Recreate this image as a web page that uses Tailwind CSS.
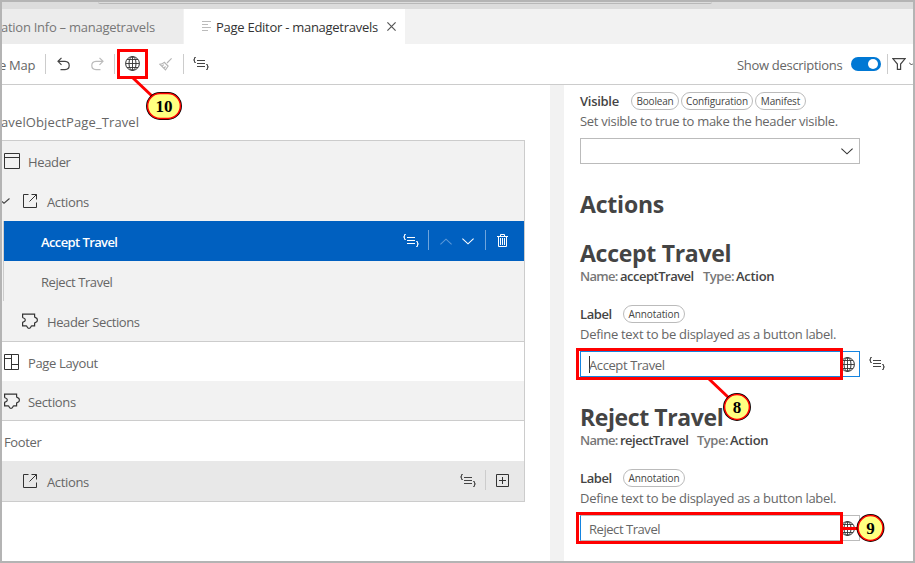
<!DOCTYPE html>
<html lang="en">
<head>
<meta charset="utf-8">
<title>Page Editor - managetravels</title>
<script src="https://cdn.jsdelivr.net/npm/@tailwindcss/browser@4"></script>
</head>
<body class="w-[915px] h-[563px] overflow-hidden bg-white">
<svg class="hidden">
  <symbol id="code" viewBox="0 0 16 13"><g fill="none" stroke="currentColor" stroke-width="1"><path d="M4 3.5h8M4 6.5h8M4 9.5h8"/><path d="M2.8.5H2.3Q1.5.5 1.5 1.3V2Q1.5 2.8.4 2.9Q1.5 3 1.5 4v.5Q1.5 5.5 2.3 5.5h.5M13.2 7.5h.5q.8 0 .8.8V9q0 .8 1.1.9q-1.1.1-1.1 1.1v.5q0 1-.8 1h-.5" stroke-width="1.1"/></g></symbol>
  <symbol id="globe" viewBox="0 0 15 15"><g fill="none" stroke="currentColor" stroke-width="1"><circle cx="7.500" cy="7.500" r="6.900"/><ellipse cx="7.500" cy="7.500" rx="3.500" ry="6.900"/><path d="M7.500.6v13.800M.6 7.500h13.800M2 3.500h11M2 11.500h11" stroke-width=".9"/></g></symbol>
  <symbol id="ext" viewBox="0 0 14 14"><path d="M5.5.5h-5v13h13v-5M6.5 7.5l7-7M8.5.5h5v5" fill="none" stroke="currentColor"/></symbol>
  <symbol id="puzzle" viewBox="0 0 16 16"><path d="M.6 1.2h12v2.3q0 1 1 1.1q1.8.5 1.8 2.4t-1.8 2.4q-1 .2-1 1.2v2.2H10q-.8 0-1 .8q-.4 1.7-2 1.7t-2-1.7q-.2-.8-1-.8H.6V9.800q0-.8.9-1Q3.300 8.300 3.300 6.900T1.500 5Q.6 4.700.6 4z" fill="none" stroke="currentColor" stroke-width="1.2"/></symbol>
  <symbol id="down" viewBox="0 0 12 7"><path d="M.4.7L6 5.800 11.600.7" fill="none" stroke="currentColor" stroke-width="1.1"/></symbol>
</svg>

<div class="w-full h-full flex flex-col border-2 border-[#b4b4b4] font-['Open_Sans','Noto_Sans',sans-serif] text-[13px] leading-[18px] text-[#666] whitespace-nowrap overflow-hidden">
  <!-- window edge -->
  <div class="h-[7px] shrink-0 bg-[#dcdcdc] pl-[96px]"><div class="w-[614px] h-[2px] rounded-b-md border-b border-[#b8b8b8]"></div></div>
  <!-- tabs -->
  <div class="h-[35px] shrink-0 flex bg-[#f2f2f2]">
    <div class="w-[181px] bg-[#ececec] flex items-center overflow-hidden text-[#777]"><span class="-ml-[1px] tracking-[-0.26px]">ation Info – managetravels</span></div>
    <div class="w-px bg-[#f2f2f2]"></div>
    <div class="w-[221px] bg-white flex items-center pl-[18px] text-[#333]">
      <svg class="w-[9px] h-[10px] mr-[5px] -mt-[1px] text-[#bbb]" viewBox="0 0 9 10"><path d="M0 .5h9M0 3.500h6M0 6.500h9M0 9.500h6" stroke="currentColor"/></svg>
      <span class="w-[163px] tracking-[-0.27px]">Page Editor - managetravels</span>
      <svg class="w-[9px] h-[9px] ml-[8px] text-[#555]" viewBox="0 0 9 9"><path d="M.4.4l8.200 8.200M8.600.4L.4 8.600" stroke="currentColor" stroke-width="1.2"/></svg>
    </div>
  </div>
  <!-- toolbar -->
  <div class="h-[41px] shrink-0 flex items-center border-b border-[#ccc]">
    <span class="w-[43px] pt-[2px] -ml-[3px] mr-[3px] tracking-[-0.3px]">e Map</span>
    <div class="w-px h-5 bg-[#ccc]"></div>
    <svg class="w-[13px] h-[14px] ml-[11px] text-[#444]" viewBox="0 0 13 14"><path d="M4.500.8L1 4.300l3.500 3.500M1 4.300h7q4.200.2 4.200 4.200T8 12.600H3.500" fill="none" stroke="currentColor" stroke-width="1.2"/></svg>
    <svg class="w-[13px] h-[14px] ml-[21px] text-[#bbb] -scale-x-100" viewBox="0 0 13 14"><path d="M4.500.8L1 4.300l3.500 3.500M1 4.300h7q4.200.2 4.200 4.200T8 12.600H3.500" fill="none" stroke="currentColor" stroke-width="1.2"/></svg>
    <div class="w-px h-5 bg-[#ccc] ml-[10px]"></div>
    <svg class="w-[15px] h-[15px] ml-[10px] -mt-px text-[#333]"><use href="#globe"/></svg>
    <svg class="w-[13px] h-[13px] ml-[19px] text-[#b4b4b4]" viewBox="0 0 13 13"><path d="M12.600.4L8 5M5 4l4.500 4.500M5.200 4.300Q3.500 6 .8 6.200L6.500 12Q7.500 10.500 9 8.300M3.200 8.200l1.600-1.500M5 10l1.600-1.500" fill="none" stroke="currentColor" stroke-width="1.100"/></svg>
    <div class="w-px h-5 bg-[#ccc] ml-[11px]"></div>
    <svg class="w-[16px] h-[13px] ml-[9px] -mt-px text-[#444]"><use href="#code"/></svg>
    <div class="ml-auto flex items-center h-full">
      <span class="w-[105px] pt-[2px] tracking-[-0.3px]">Show descriptions</span>
      <div class="w-[30px] h-[14px] ml-[9px] rounded-full bg-[#0078d4] flex items-center justify-end pr-[3px]"><div class="size-[10px] rounded-full bg-white"></div></div>
      <div class="w-px h-5 bg-[#ccc] ml-[6px]"></div>
      <svg class="w-[14px] h-[12px] ml-[4px] text-[#444]" viewBox="0 0 14 12"><path d="M.8.6h12.400L8.600 6v5.400H5.400V6z" fill="none" stroke="currentColor" stroke-width="1.200"/></svg>
      <svg class="w-[4px] h-[4px] ml-[3px] text-[#444]" viewBox="0 0 4 4"><path d="M0 .5L2.500 3 4 1.500" fill="none" stroke="currentColor"/></svg>
    </div>
  </div>

  <div class="flex flex-1 min-h-0">
    <!-- outline -->
    <div class="w-[548px] shrink-0 tracking-[-0.35px]">
      <div class="h-[55px] pt-[28px] tracking-[0.12px]"><span class="-ml-px">avelObjectPage_Travel</span></div>
      <div class="w-[523px] border-y border-r border-[#ccc] bg-[#f2f2f2]">
        <div class="h-10 flex items-center pl-[2px]">
          <svg class="size-4 mr-2 text-[#333]" viewBox="0 0 16 16"><path d="M.5.5h15v15H.5zM.5 4.500h15" fill="none" stroke="currentColor"/></svg><span class="pt-px">Header</span>
        </div>
        <div class="h-10 flex items-center">
          <svg class="w-[8px] h-[6px] mr-[13px] text-[#444]" viewBox="0 0 8 6"><path d="M0 3.500L2 5.200 7.500.5" fill="none" stroke="currentColor" stroke-width="1.100"/></svg>
          <svg class="size-[14px] mr-[10px] text-[#333]"><use href="#ext"/></svg><span class="pt-px">Actions</span>
        </div>
        <div class="border-l border-[#ccc] ml-px">
          <div class="h-10 flex items-center bg-[#0060c0] pl-[37px] text-white">
            <span class="pt-px font-semibold tracking-[-0.6px]">Accept Travel</span>
            <div class="ml-auto flex items-center">
              <svg class="w-[16px] h-[13px] -mt-px"><use href="#code"/></svg>
              <div class="w-px h-5 bg-[#6fa5dc] ml-[9px] -mt-[2px]"></div>
              <svg class="w-3 h-[7px] ml-[11px] text-[#5b98d8] rotate-180"><use href="#down"/></svg>
              <svg class="w-3 h-[7px] ml-[10px]"><use href="#down"/></svg>
              <div class="w-px h-5 bg-[#6fa5dc] ml-[11px] -mt-[2px]"></div>
              <svg class="w-[11px] h-[13px] ml-[11px] mr-[16px] -mt-px" viewBox="0 0 11 13"><path d="M0 2.500h11M3.500 2.500v-2h4v2M1.500 2.500v10h8v-10M3.500 4v7M5.500 4v7M7.500 4v7" fill="none" stroke="currentColor"/></svg>
            </div>
          </div>
          <div class="h-10 flex items-center pl-[37px]"><span class="pt-px tracking-[-0.42px]">Reject Travel</span></div>
        </div>
        <div class="h-10 flex items-center pl-5"><svg class="size-4 mr-[9px] text-[#333]"><use href="#puzzle"/></svg><span class="pt-px tracking-[-0.4px]">Header Sections</span></div>
      </div>
      <div class="w-[523px] border-r border-b border-[#ccc]">
        <div class="h-[39px] flex items-center pl-[2px]"><svg class="w-[15px] h-4 mr-[9px] text-[#333]" viewBox="0 0 15 16"><path d="M.5.5h14v15H.5zM.5 4.500h7M7.500.5v15M7.500 10.500h7" fill="none" stroke="currentColor"/></svg><span class="pt-[2px]">Page Layout</span></div>
        <div class="h-[39px] flex items-center pl-[2px] bg-[#f2f2f2]"><svg class="size-4 mr-2 text-[#333]"><use href="#puzzle"/></svg><span class="pt-[2px]">Sections</span></div>
        <div class="h-[41px] border-t border-[#ccc] flex items-center pl-[2px]"><span class="pt-px">Footer</span></div>
        <div class="h-10 flex items-center bg-[#e8e8e8] pl-[21px]">
          <svg class="size-[14px] mr-[10px] text-[#333]"><use href="#ext"/></svg><span class="pt-px">Actions</span>
          <svg class="w-[16px] h-[13px] ml-auto -mt-px text-[#444]"><use href="#code"/></svg>
          <div class="w-px h-5 bg-[#ccc] ml-[9px] -mt-[2px]"></div>
          <svg class="size-[13px] ml-[10px] mr-[15px] -mt-px text-[#333]" viewBox="0 0 13 13"><path d="M.5.5h12v12H.5zM6.500 3v7M3 6.500h7" fill="none" stroke="currentColor"/></svg>
        </div>
      </div>
    </div>
    <div class="w-[14px] shrink-0 bg-[#f2f2f2]"></div>
    <!-- properties -->
    <div class="flex-1 pl-4 pt-[7px] tracking-[-0.29px]">
      <div class="flex items-center h-[18px] text-[#444]">
        <span class="w-[51px] font-semibold">Visible</span>
        <span class="h-[18px] w-12 rounded-full border border-[#bbb] text-center text-[10px] leading-[17px] tracking-[-0.2px]">Boolean</span>
        <span class="h-[18px] w-[72px] ml-[2px] rounded-full border border-[#bbb] text-center text-[10px] leading-[17px] tracking-[-0.15px]">Configuration</span>
        <span class="h-[18px] w-[51px] ml-[2px] rounded-full border border-[#bbb] text-center text-[10px] leading-[17px] tracking-[-0.15px]">Manifest</span>
      </div>
      <div class="mt-[2px]">Set visible to true to make the header visible.</div>
      <div class="mt-[8px] w-[280px] h-[26px] border border-[#bbb] flex items-center justify-end pr-[6px] text-[#333]"><svg class="w-3 h-[7px]"><use href="#down"/></svg></div>
      <h2 class="mt-[24px] h-8 leading-8 text-[23px] font-bold text-[#444] tracking-[-0.2px]">Actions</h2>
      <h3 class="mt-[17px] h-8 leading-8 text-[23px] font-bold text-[#444] tracking-[-0.28px]">Accept Travel</h3>
      <div class="-mt-[2px] h-[18px] flex font-semibold"><span class="w-10 text-[#777] tracking-[-0.7px]">Name:</span><span class="w-[83px] text-[#444] tracking-[-0.5px]">acceptTravel</span><span class="w-[33px] text-[#777] tracking-[-0.5px]">Type:</span><span class="text-[#444]">Action</span></div>
      <div class="mt-5 flex items-center h-[18px] text-[#444]"><span class="w-[43px] font-semibold tracking-[-0.4px]">Label</span><span class="h-[18px] w-[62px] rounded-full border border-[#bbb] text-center text-[10px] leading-[17px] tracking-[-0.1px]">Annotation</span></div>
      <div class="mt-[2px]">Define text to be displayed as a button label.</div>
      <div class="mt-[8px] flex items-center">
        <div class="w-[280px] h-[26px] border border-[#1484e0] flex items-center pl-[8px] pr-[4px]"><i class="w-px h-[17px] -mr-px bg-[#333]"></i><span class="pt-[2px] tracking-[-0.4px]">Accept Travel</span><svg class="size-[15px] ml-auto text-[#333]"><use href="#globe"/></svg></div>
        <svg class="w-[16px] h-[13px] ml-[9px] -mt-px text-[#444]"><use href="#code"/></svg>
      </div>
      <h3 class="mt-[24px] h-8 leading-8 text-[23px] font-bold text-[#444] tracking-[-0.4px]">Reject Travel</h3>
      <div class="-mt-[2px] h-[18px] flex font-semibold"><span class="w-10 text-[#777] tracking-[-0.7px]">Name:</span><span class="w-[77px] text-[#444] tracking-[-0.5px]">rejectTravel</span><span class="w-[33px] text-[#777] tracking-[-0.5px]">Type:</span><span class="text-[#444]">Action</span></div>
      <div class="mt-5 flex items-center h-[18px] text-[#444]"><span class="w-[43px] font-semibold tracking-[-0.4px]">Label</span><span class="h-[18px] w-[62px] rounded-full border border-[#bbb] text-center text-[10px] leading-[17px] tracking-[-0.1px]">Annotation</span></div>
      <div class="mt-[2px]">Define text to be displayed as a button label.</div>
      <div class="mt-[8px] w-[280px] h-[26px] border border-[#bbb] border-l-[#1484e0] flex items-center pl-[8px] pr-[4px]"><span class="pt-[2px] tracking-[-0.45px]">Reject Travel</span><svg class="size-[15px] ml-auto text-[#333]"><use href="#globe"/></svg></div>
    </div>
  </div>
</div>

<!-- callouts -->
<svg class="absolute left-0 top-0" width="915" height="563" viewBox="0 0 915 563">
  <g fill="none" stroke="#f00" stroke-width="3">
    <path d="M133 78L152 96M709 379L729 398M842 528.500h16"/>
    <path d="M118.500 50.500h28v27h-28zM577.500 349.500h264v29h-264zM577.500 513.500h264v29h-264z"/>
  </g>
  <g fill="#ffff80" stroke="#000" stroke-width="1.500">
    <rect x="146.800" y="92.800" width="34.400" height="26.400" rx="13.200"/><circle cx="737" cy="407" r="13.200"/><circle cx="870.500" cy="528" r="13.200"/>
  </g>
  <g fill="none" stroke="#f00" stroke-width="1.500">
    <rect x="147.600" y="93.600" width="32.800" height="24.800" rx="12.400"/><circle cx="737" cy="407" r="12.400"/><circle cx="870.500" cy="528" r="12.400"/>
  </g>
  <g font-family="Liberation Serif, serif" font-weight="700" font-size="17" fill="#000" text-anchor="middle"><text x="164" y="112">10</text><text x="737" y="413">8</text><text x="870.500" y="534">9</text></g>
</svg>
</body>
</html>
